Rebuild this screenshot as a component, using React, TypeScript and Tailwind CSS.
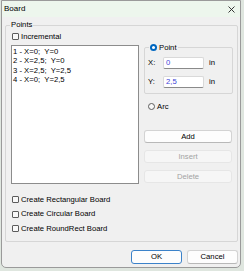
import React from "react";

function CheckBox({ label }: { label: string }) {
  return (
    <div className="flex items-center h-[7px] gap-[2px]">
      <span className="w-[7px] h-[7px] border border-[#5c5c5c] rounded-[1px] bg-[#f8f8f8] shrink-0" />
      <span className="leading-none">{label}</span>
    </div>
  );
}

function Radio({ label, checked }: { label: string; checked?: boolean }) {
  return (
    <div className="flex items-center h-[7px] gap-[2px]">
      {checked ? (
        <span className="w-[7px] h-[7px] rounded-full bg-[#0067c0] flex items-center justify-center shrink-0">
          <span className="w-[3px] h-[3px] rounded-full bg-white" />
        </span>
      ) : (
        <span className="w-[7px] h-[7px] rounded-full border border-[#5c5c5c] bg-[#f8f8f8] shrink-0" />
      )}
      <span className="leading-none">{label}</span>
    </div>
  );
}

const points = ["1 - X=0;  Y=0", "2 - X=2,5;  Y=0", "3 - X=2,5;  Y=2,5", "4 - X=0;  Y=2,5"];

export default function App() {
  return (
    <div className="w-[244px] h-[271px] bg-[#dfe6df] overflow-hidden font-['Liberation_Sans',Arial,sans-serif] text-[7.7px] text-black">
      <div className="ml-[1px] w-[240px] h-[268px] border border-[#9a9a9a] rounded-b-[5px] bg-[#f0f0f0] flex flex-col overflow-hidden">
        {/* Title bar */}
        <div className="h-[16px] bg-[#edf6ed] flex items-center justify-between pl-[2px] pr-[5px]">
          <span className="leading-none text-[8px]">Board</span>
          <svg width="7" height="7" viewBox="0 0 7 7" className="text-[#222]">
            <path d="M0.5 0.5 L6.5 6.5 M6.5 0.5 L0.5 6.5" stroke="currentColor" strokeWidth="0.9" />
          </svg>
        </div>

        {/* Points group */}
        <div className="ml-[3px] mt-[8px] w-[233px] h-[217px] relative border border-[#d6d6d6] rounded-[2px] flex flex-col pl-[5px]">
          <span className="absolute left-[4px] top-[-5px] px-[1px] bg-[#f0f0f0] leading-none">Points</span>

          <div className="ml-[1px] mt-[7px]">
            <CheckBox label="Incremental" />
          </div>

          <div className="flex mt-[5px]">
            <div className="w-[128px] h-[139px] bg-white border border-[#8c8c8c] pl-[1px] pt-[1px] shrink-0">
              {points.map((p) => (
                <div key={p} className="leading-[9.3px] whitespace-pre">{p}</div>
              ))}
            </div>

            <div className="ml-[5px] w-[89px] flex flex-col">
              {/* Point sub group */}
              <div className="mt-[2px] h-[47px] relative border border-[#d6d6d6] rounded-[2px] flex flex-col pl-[3px] pt-[9px]">
                <div className="absolute left-[4px] top-[-4px] px-[1px] bg-[#f0f0f0]">
                  <Radio label="Point" checked />
                </div>
                <div className="flex items-center">
                  <span className="w-[15px] leading-none">X:</span>
                  <div className="w-[41px] h-[12px] bg-white border border-[#d9d9d9] border-b-[#8a8a8a] rounded-[2px] pl-[2px] flex items-center text-[#3d45d8] leading-none">0</div>
                  <span className="ml-[5px] leading-none">in</span>
                </div>
                <div className="flex items-center mt-[7px]">
                  <span className="w-[15px] leading-none">Y:</span>
                  <div className="w-[41px] h-[12px] bg-white border border-[#d9d9d9] border-b-[#8a8a8a] rounded-[2px] pl-[2px] flex items-center text-[#3d45d8] leading-none">2,5</div>
                  <span className="ml-[5px] leading-none">in</span>
                </div>
              </div>

              <div className="ml-[4px] mt-[9px]">
                <Radio label="Arc" />
              </div>

              <button className="mt-[20px] w-[88px] h-[13px] bg-[#fdfdfd] border border-[#d3d3d3] border-b-[#b8b8b8] rounded-[3px] leading-none">Add</button>
              <button className="mt-[7px] w-[88px] h-[13px] bg-[#f6f6f6] border border-[#e6e6e6] rounded-[3px] leading-none text-[#a3a3a3]">Insert</button>
              <button className="mt-[7px] w-[88px] h-[13px] bg-[#f6f6f6] border border-[#e6e6e6] rounded-[3px] leading-none text-[#a3a3a3]">Delete</button>
            </div>
          </div>

          <div className="ml-[1px] mt-[12px] flex flex-col gap-[7.5px]">
            <CheckBox label="Create Rectangular Board" />
            <CheckBox label="Create Circular Board" />
            <CheckBox label="Create RoundRect Board" />
          </div>
        </div>

        {/* Dialog buttons */}
        <div className="mt-[8px] flex justify-end gap-[5px] pr-[2px]">
          <button className="w-[51px] h-[14px] bg-[#fdfdfd] border border-[#3b82c9] rounded-[3px] leading-none">OK</button>
          <button className="w-[51px] h-[14px] bg-[#fdfdfd] border border-[#d3d3d3] border-b-[#b8b8b8] rounded-[3px] leading-none">Cancel</button>
        </div>
      </div>
    </div>
  );
}
